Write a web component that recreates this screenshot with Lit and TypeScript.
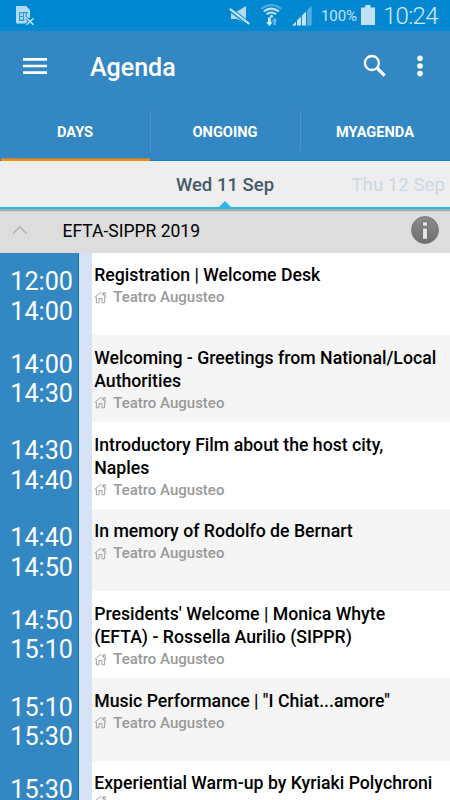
import { LitElement, html, css, svg } from "lit";
import { customElement } from "lit/decorators.js";

interface Session {
  start: string;
  end: string;
  lines: string[];
  place: string;
}

const SESSIONS: Session[] = [
  { start: "12:00", end: "14:00", lines: ["Registration | Welcome Desk"], place: "Teatro Augusteo" },
  { start: "14:00", end: "14:30", lines: ["Welcoming - Greetings from National/Local", "Authorities"], place: "Teatro Augusteo" },
  { start: "14:30", end: "14:40", lines: ["Introductory Film about the host city,", "Naples"], place: "Teatro Augusteo" },
  { start: "14:40", end: "14:50", lines: ["In memory of Rodolfo de Bernart"], place: "Teatro Augusteo" },
  { start: "14:50", end: "15:10", lines: ["Presidents' Welcome | Monica Whyte", "(EFTA) - Rossella Aurilio (SIPPR)"], place: "Teatro Augusteo" },
  { start: "15:10", end: "15:30", lines: ["Music Performance | \"I Chiat...amore\""], place: "Teatro Augusteo" },
  { start: "15:30", end: "", lines: ["Experiential Warm-up by Kyriaki Polychroni"], place: "" },
];

const house = svg`
  <path d="M0.6 6.6 6.5 1.4 12.4 6.6M9.6 4V1.6H11.2V5.4M2.4 6V11.8H5V7.6H8V11.8H10.6V6" fill="none" stroke="#8c8c92" stroke-width="0.8"/>
`;

@customElement("status-bar")
class StatusBar extends LitElement {
  static styles = css`
    :host { display: flex; height: 31px; background: #0288d1; color: #c3e3f5; position: relative; }
    .icons { display: block; width: 450px; height: 31px; }
    .pct, .clock { position: absolute; white-space: nowrap; line-height: 31px; }
    .pct { left: 321px; top: 1px; font-size: 15px; letter-spacing: -0.1px; }
    .clock { left: 383px; top: 1px; font-size: 24px; font-weight: 300; letter-spacing: -0.7px; color: #d2eaf8; }
  `;
  render() {
    return html`
      <svg class="icons" viewBox="0 0 450 31">
        <path d="M17 6H26L30 10V17L26 23.5H17Q16 23.5 16 22.5V7Q16 6 17 6Z" fill="#b3dbf0"/>
        <path d="M19 12.6H28M19.6 20.4H24.5M19.6 12V21M19 16.5H23M23.4 12.5V20.5M26.2 12.5V17" fill="none" stroke="#2c9bd8" stroke-width="1.2"/>
        <path d="M26.7 18.2 33.5 24.8M33.5 18.2 26.7 24.8" stroke="#0288d1" stroke-width="3"/>
        <path d="M26.7 18.2 33.5 24.8M33.5 18.2 26.7 24.8" stroke="#c3e3f5" stroke-width="1.5"/>
        <path d="M231 11.5H237L246 6V23.5L237 19H231Z" fill="#b3dbf0"/>
        <path d="M229.8 9.2 249.2 23.9" stroke="#0288d1" stroke-width="4.4"/>
        <path d="M229.8 8.9 249.2 23.8" stroke="#c3e3f5" stroke-width="2.2"/>
        <g fill="none" stroke="#c3e3f5" stroke-width="2">
          <path d="M261.3 8.8Q271.3 1.2 281.3 8.8" opacity=".4"/>
          <path d="M263.7 11.5Q271.3 5.8 278.9 11.5"/>
          <path d="M266.5 14.3Q271.3 10.8 276.1 14.3"/>
        </g>
        <circle cx="271.5" cy="16.3" r="1.5" fill="#c3e3f5"/>
        <path d="M268 17.5H270.8V22.3H272.6L269.4 26 266.2 22.3H268Z" fill="#d4ecf8"/>
        <path d="M273.3 25V21.3H271.7L274.6 17.4 277.5 21.3H275.9V25Z" fill="#63b5e2"/>
        <path d="M292 25.5 296 21.5V25.5ZM297 20.5 301 16.5V25.5H297ZM302 15.5 306 11.5V25.5H302Z" fill="#c3e3f5"/>
        <path d="M307 10.5 311.7 5.5V25.5H307Z" fill="#55aede"/>
        <path d="M361 7.5H365.3V5H370.5V7.5H375V25H361Z" fill="#c3e3f5"/>
      </svg>
      <span class="pct">100%</span>
      <span class="clock">10:24</span>
    `;
  }
}

@customElement("session-row")
class SessionRow extends LitElement {
  static properties = { session: { attribute: false } };
  declare session: Session;
  static styles = css`
    :host { display: flex; height: 82.7px; background: #fff; flex: none; }
    :host(.two) { height: 86.7px; }
    :host(.alt) { background: #f5f5f5; }
    .time {
      box-sizing: border-box; width: 79px; border-right: 1px solid #0f79b8; background: #3387c3;
      color: #fff; font-size: 25.2px; line-height: 29.6px; padding: 14.4px 5px 0 0; text-align: right; flex: none;
    }
    .strip { width: 13px; background: #d7e3f5; flex: none; }
    .body { padding: 11.6px 0 0 2.2px; white-space: nowrap; }
    .title { font-size: 17.68px; font-weight: 500; line-height: 23px; color: #000; }
    .place { display: flex; align-items: center; font-size: 15px; font-weight: 500; line-height: 20px; color: #999; gap: 6px; }
    .house { width: 13px; height: 13px; display: block; }
  `;
  render() {
    const s = this.session;
    return html`
      <div class="time"><div>${s.start}</div><div>${s.end}</div></div>
      <div class="strip"></div>
      <div class="body">
        ${s.lines.map((l) => html`<div class="title">${l}</div>`)}
        <div class="place"><svg class="house" viewBox="0 0 13 13">${house}</svg><span>${s.place}</span></div>
      </div>
    `;
  }
}

@customElement("app-root")
class AppRoot extends LitElement {
  static styles = css`
    :host {
      display: flex; flex-direction: column; width: 450px; height: 800px; overflow: hidden;
      font-family: Roboto, "Liberation Sans", sans-serif; background: #fff;
    }
    status-bar, .bar, .tabs, .days, .group { flex: none; }
    .bar { height: 71px; background: #3387c3; display: flex; align-items: center; color: #fff; padding: 0 26px 0 23px; }
    .menu { width: 24px; height: 18px; margin-right: 43px; margin-top: -1px; }
    .heading { font-size: 25px; font-weight: 500; flex: 1; line-height: 30px; padding-top: 3px; }
    .search { width: 24px; height: 24px; margin-right: 29px; margin-top: -1px; }
    .more { width: 8px; height: 24px; margin-top: -1px; }
    .tabs { height: 59px; background: #3387c3; display: grid; grid-template: 58px / repeat(3, 150px); box-sizing: border-box; border-bottom: 1px solid #0f7fc4; position: relative; z-index: 1; }
    .tab { position: relative; color: #fff; font-size: 14.6px; font-weight: 700; text-align: center; line-height: 60px; }
    .tab + .tab::before { content: ""; position: absolute; left: 0; top: 9px; width: 1px; height: 40px; background: #4b96cb; }
    .tab.on::after { content: ""; position: absolute; left: 1px; right: 0; bottom: -1px; height: 2px; background: #fb8c00; border-top: 1px solid #a08a76; }
    .days { height: 48px; background: #eee; box-sizing: border-box; border-bottom: 2px solid #29b6e8; position: relative; display: grid; grid-template-columns: 150px 150px 150px; font-size: 18.7px; line-height: 49px; }
    .now { text-align: center; color: #455a69; font-weight: 500; font-size: 18.5px; }
    .next { color: #ccd8e5; text-align: right; padding-right: 5px; }
    .caret { position: absolute; left: 219px; bottom: 0; width: 12px; height: 6px; }
    .group { height: 43.7px; box-sizing: border-box; background: #ddd; border-top: 2px solid #ababab; box-shadow: inset 0 1px 0 #d2d2d2; display: flex; align-items: center; padding: 0 10px 4px 12px; color: #000; }
    .chev { width: 16px; height: 10px; margin-right: 34.5px; }
    .name { flex: 1; font-size: 17.5px; padding-top: 2.5px; }
    .info { width: 30px; height: 30px; }
  `;
  render() {
    return html`
      <status-bar></status-bar>
      <div class="bar">
        <svg class="menu" viewBox="0 0 24 18"><path d="M0 2.3H24M0 9H24M0 15.7H24" stroke="#fff" stroke-width="2.7"/></svg>
        <div class="heading">Agenda</div>
        <svg class="search" viewBox="0 0 24 24"><circle cx="8.9" cy="9" r="7" fill="none" stroke="#fff" stroke-width="2.3"/><path d="M14 14 21.6 21.6" stroke="#fff" stroke-width="3.2"/></svg>
        <svg class="more" viewBox="0 0 8 24"><g fill="#fff"><circle cx="4" cy="4.3" r="2.8"/><circle cx="4" cy="12" r="2.8"/><circle cx="4" cy="19.6" r="2.8"/></g></svg>
      </div>
      <div class="tabs">
        <div class="tab on">DAYS</div>
        <div class="tab">ONGOING</div>
        <div class="tab">MYAGENDA</div>
      </div>
      <div class="days">
        <span></span><span class="now">Wed 11 Sep</span><span class="next">Thu 12 Sep</span>
        <svg class="caret" viewBox="0 0 12 6"><path d="M0 6 6 0 12 6Z" fill="#29b6e8"/></svg>
      </div>
      <div class="group">
        <svg class="chev" viewBox="0 0 16 10"><path d="M1 8.5 7.8 1.8 14.6 8.5" fill="none" stroke="#bbb" stroke-width="1.8"/></svg>
        <div class="name">EFTA-SIPPR 2019</div>
        <svg class="info" viewBox="0 0 30 30">
          <defs><linearGradient id="g" x1="0" y1="0" x2="0" y2="1"><stop offset="0" stop-color="#8c8c8c"/><stop offset="1" stop-color="#6f6f6f"/></linearGradient></defs>
          <circle cx="15" cy="15" r="13.5" fill="url(#g)" stroke="#686868" stroke-width="0.7"/>
          <path d="M12.4 6.5H17.6V11H12.4ZM12.4 12.8H17.6V24H12.4Z" fill="#666"/>
          <path d="M13 7.2H17V10.8H13ZM13 13.5H17V23.8H13Z" fill="#e6e6e6"/>
        </svg>
      </div>
      ${SESSIONS.map((s, i) => html`<session-row class="${i % 2 ? "alt" : ""} ${s.lines.length > 1 ? "two" : ""}" .session=${s}></session-row>`)}
    `;
  }
}
